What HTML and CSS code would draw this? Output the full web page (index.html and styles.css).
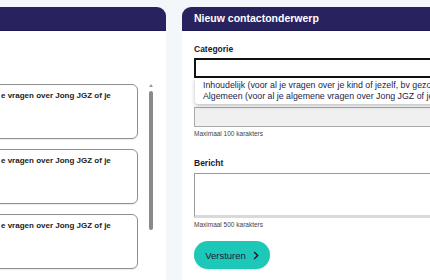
FILE: index.html
```html
<!DOCTYPE html>
<html lang="nl">
<head>
<meta charset="utf-8">
<link rel="stylesheet" href="styles.css">
</head>
<body>
<div class="page">
  <section class="panel panel-left">
    <div class="panel-head left-head"></div>
    <div class="left-body">
      <div class="cards">
        <div class="card"><span class="card-text">e vragen over Jong JGZ of je</span></div>
        <div class="card"><span class="card-text">e vragen over Jong JGZ of je</span></div>
        <div class="card"><span class="card-text">e vragen over Jong JGZ of je</span></div>
      </div>
      <div class="scrollbar">
        <div class="scroll-arrow"></div>
        <div class="scroll-thumb"></div>
      </div>
    </div>
  </section>
  <section class="panel panel-right">
    <div class="panel-head right-head">Nieuw contactonderwerp</div>
    <div class="form">
      <label class="label">Categorie</label>
      <div class="select-wrap">
        <div class="select"></div>
        <ul class="dropdown">
          <li>Inhoudelijk (voor al je vragen over je kind of jezelf, bv gezon</li>
          <li>Algemeen (voor al je algemene vragen over Jong JGZ of je a</li>
        </ul>
      </div>
      <div class="input"></div>
      <div class="hint">Maximaal 100 karakters</div>
      <label class="label label-msg">Bericht</label>
      <div class="textarea"></div>
      <div class="hint">Maximaal 500 karakters</div>
      <button class="btn">Versturen
        <svg class="chev" width="6" height="9" viewBox="0 0 6 9"><path d="M1.2 1 L4.6 4.5 L1.2 8" fill="none" stroke="#1b1a3a" stroke-width="1.5"/></svg>
      </button>
    </div>
  </section>
</div>
</body>
</html>
```
FILE: styles.css
```css
html, body {
  margin: 0;
  padding: 0;
}
body {
  width: 430px;
  height: 280px;
  overflow: hidden;
  background: #f3f7f9;
  font-family: "Liberation Sans", Arial, sans-serif;
  color: #1b1a2e;
}
.page {
  display: flex;
  padding-top: 7px;
  gap: 16px;
  height: 273px;
}
.panel {
  background: #fff;
  display: flex;
  flex-direction: column;
  flex-shrink: 0;
}
.panel-left {
  width: 166px;
  border-top-right-radius: 9px;
  overflow: hidden;
}
.panel-right {
  width: 248px;
  border-top-left-radius: 9px;
  overflow: hidden;
}
.panel-head {
  height: 23px;
  background: #28235f;
  border-bottom: 1px solid #1e1a52;
  color: #fff;
  font-weight: bold;
  font-size: 10.5px;
  line-height: 23px;
  flex-shrink: 0;
}
.right-head {
  padding-left: 12px;
}
.left-body {
  display: flex;
  padding-top: 53px;
}
.cards {
  width: 147px;
  display: flex;
  flex-direction: column;
  gap: 10px;
  flex-shrink: 0;
}
.card {
  height: 53px;
  margin-left: -10px;
  width: 146px;
  border: 1px solid #8f8f8f;
  border-radius: 6px;
  overflow: hidden;
  white-space: nowrap;
  box-shadow: 0 1px 1px rgba(0,0,0,0.08);
}
.card-text {
  display: block;
  padding-left: 10px;
  margin-top: 6px;
  font-size: 8px;
  font-weight: bold;
  color: #222;
}
.scrollbar {
  margin-left: 1px;
  width: 5px;
  display: flex;
  flex-direction: column;
  align-items: center;
}
.scroll-arrow {
  width: 0;
  height: 0;
  border-left: 2px solid transparent;
  border-right: 2px solid transparent;
  border-bottom: 3px solid #999;
}
.scroll-thumb {
  width: 4px;
  height: 139px;
  margin-top: 4px;
  background: #8a8a8a;
  border-radius: 2px;
}
.form {
  padding: 12px 0 0 12px;
  display: flex;
  flex-direction: column;
  align-items: flex-start;
}
.label {
  font-size: 8.5px;
  font-weight: bold;
  line-height: 12px;
  color: #1b1a2e;
}
.select-wrap {
  margin-top: 3px;
  width: 260px;
}
.select {
  height: 16px;
  border: 2px solid #111;
  background: #fff;
}
.dropdown {
  position: absolute;
  left: 195px;
  top: 78px;
  width: 235px;
  margin: 0;
  padding: 2px 0 3px 8px;
  list-style: none;
  background: #fff;
  box-shadow: 0 2px 4px rgba(0,0,0,0.25);
  border-radius: 0 0 3px 3px;
  font-size: 8.8px;
  line-height: 10.5px;
  color: #1e1c4a;
  white-space: nowrap;
  overflow: hidden;
  z-index: 2;
}
.input {
  margin-top: 29px;
  width: 256px;
  height: 18px;
  background: #f0f0f0;
  border: 1.5px solid #a9a9a9;
}
.hint {
  font-size: 6.5px;
  line-height: 9px;
  margin-top: 2px;
  color: #444;
}
.label-msg {
  margin-top: 19px;
}
.textarea {
  margin-top: 4px;
  width: 256px;
  height: 41px;
  border: 1.5px solid #9a9a9a;
  border-bottom: 3px solid #d9d9d9;
  background: #fff;
}
.btn {
  margin-top: 12px;
  width: 76px;
  height: 28px;
  border: none;
  border-radius: 14px;
  background: #1ec8b8;
  color: #1b1a3a;
  font-family: "Liberation Sans", Arial, sans-serif;
  font-size: 9.5px;
  font-weight: 500;
  display: flex;
  align-items: center;
  justify-content: center;
  gap: 7px;
  padding: 0;
  box-shadow: 0 1px 2px rgba(0,0,0,0.1);
}
.chev {
  display: block;
}
```
